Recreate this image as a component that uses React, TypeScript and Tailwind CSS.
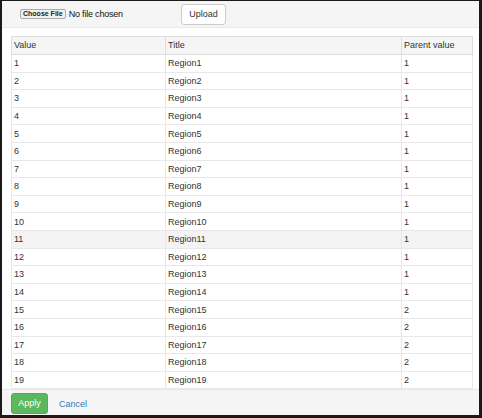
const rows = Array.from({ length: 19 }, (_, i) => ({
  value: i + 1,
  title: `Region${i + 1}`,
  parent: i < 14 ? 1 : 2,
}));

export default function App() {
  return (
    <div
      className="w-[482px] h-[418px] bg-white border-l-2 border-r-[3px] border-t border-b-[3px] border-[#1a1a1a] flex flex-col text-[#333] text-[9px]"
      style={{ fontFamily: '"Liberation Sans", Arial, sans-serif' }}
    >
      <div className="h-[27px] bg-[#f5f5f5] border-b border-[#eaeaea] flex items-start shrink-0">
        <div className="flex items-center ml-[18px] mt-[8px]">
          <button className="h-[10px] px-[2px] bg-[#f0f0f0] border border-[#aaa] rounded-[2px] text-[7px] leading-[8px] font-bold text-[#222]">
            Choose File
          </button>
          <span className="ml-[3px] text-[9px] text-[#111] leading-[10px] tracking-[-0.2px]">No file chosen</span>
        </div>
        <button className="ml-[58px] mt-[3px] w-[45px] h-[21px] bg-white border border-[#ccc] rounded-[3px] text-[9px] text-[#333]">
          Upload
        </button>
      </div>

      <div className="flex-1 px-[9px] pt-[8px]">
        <table className="w-[462px] border-collapse border border-[#ddd] table-fixed">
          <colgroup>
            <col className="w-[154px]" />
            <col className="w-[236px]" />
            <col />
          </colgroup>
          <thead>
            <tr className="h-[18px] bg-[#f5f5f5]">
              <th className="text-left font-normal pl-[2px] border border-[#ddd]">Value</th>
              <th className="text-left font-normal pl-[2px] border border-[#ddd]">Title</th>
              <th className="text-left font-normal pl-[2px] border border-[#ddd]">Parent value</th>
            </tr>
          </thead>
          <tbody>
            {rows.map((r) => (
              <tr key={r.value} className={`h-[17.6px] ${r.value === 11 ? "bg-[#f3f3f3]" : ""}`}>
                <td className="pl-[2px] border border-[#e8e8e8] leading-[10px] p-0">{r.value}</td>
                <td className="pl-[2px] border border-[#e8e8e8] leading-[10px] p-0">{r.title}</td>
                <td className="pl-[2px] border border-[#e8e8e8] leading-[10px] p-0">{r.parent}</td>
              </tr>
            ))}
          </tbody>
        </table>
      </div>

      <div className="h-[26px] bg-[#f5f5f5] border-t border-[#e8e8e8] flex items-start pt-[3px] shrink-0 pl-[9px]">
        <button className="w-[37px] h-[21px] bg-[#5cb85c] border border-[#4cae4c] rounded-[3px] text-white text-[9px]">
          Apply
        </button>
        <span className="ml-[11px] mt-[5px] text-[#337ab7] text-[9px]">Cancel</span>
      </div>
    </div>
  );
}
